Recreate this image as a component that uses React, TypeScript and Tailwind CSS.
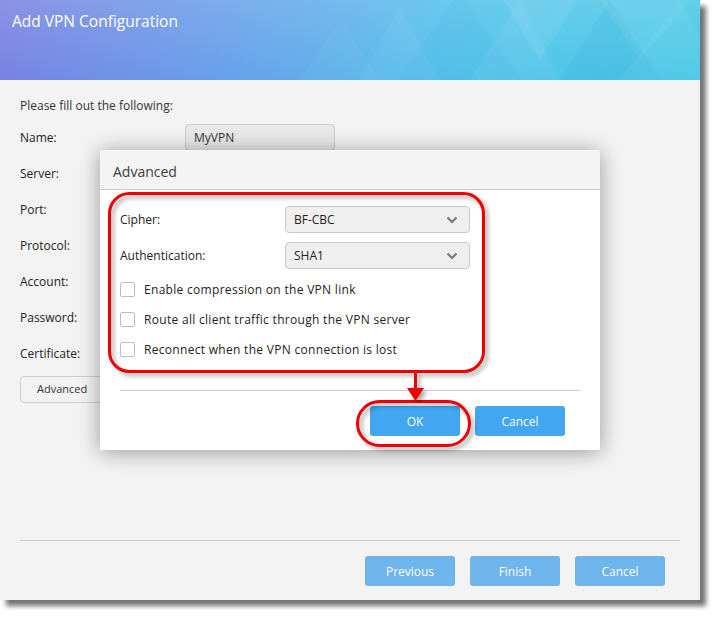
import React from 'react';

const fields = ['Name:', 'Server:', 'Port:', 'Protocol:', 'Account:', 'Password:', 'Certificate:'];

function Chevron() {
  return (
    <svg width="12" height="8" viewBox="0 0 12 8" className="shrink-0">
      <path d="M1.5 1.5 L6 6 L10.5 1.5" fill="none" stroke="#7a7a7a" strokeWidth="2.2" />
    </svg>
  );
}

function Select({ value }: { value: string }) {
  return (
    <div className="flex h-[27px] w-[185px] items-center justify-between rounded-[4px] border border-[#c9c9c9] bg-[#efefef] pl-[8px] pr-[11px] text-[12px] text-[#222]">
      <span>{value}</span>
      <Chevron />
    </div>
  );
}

function Check({ label }: { label: string }) {
  return (
    <div className="flex h-[15px] items-center gap-[9px]">
      <div className="h-[15px] w-[15px] rounded-[2px] border border-[#bdbdbd] bg-white" />
      <span className="text-[12px] tracking-[0.3px] text-[#222]">{label}</span>
    </div>
  );
}

// header decoration: faint triangles on the right half
function HeaderPattern() {
  return (
    <svg className="absolute inset-0" width="700" height="80" viewBox="0 0 700 80">
      <polygon points="360,80 400,5 440,80" fill="#ffffff" opacity="0.05" />
      <polygon points="400,80 460,-10 520,80" fill="#3aa7d8" opacity="0.1" />
      <polygon points="470,80 520,0 560,80" fill="#ffffff" opacity="0.06" />
      <polygon points="500,-5 540,60 580,-5" fill="#ffffff" opacity="0.08" />
      <polygon points="560,80 610,0 660,80" fill="#2f9fd0" opacity="0.12" />
      <polygon points="600,0 640,60 690,0" fill="#ffffff" opacity="0.06" />
      <polygon points="620,80 680,0 720,80" fill="#ffffff" opacity="0.05" />
      <polygon points="300,80 340,20 380,80" fill="#ffffff" opacity="0.03" />
    </svg>
  );
}

function Annotations() {
  return (
    <svg className="pointer-events-none absolute inset-0" width="720" height="620" viewBox="0 0 720 620">
      <defs>
        <filter id="ds" x="-10%" y="-10%" width="130%" height="130%">
          <feDropShadow dx="3" dy="3" stdDeviation="2" floodColor="#000" floodOpacity="0.35" />
        </filter>
      </defs>
      <g filter="url(#ds)" fill="none" stroke="#ee0000" strokeWidth="3">
        <rect x="109.5" y="193.5" width="374" height="178" rx="20" />
        <rect x="357.5" y="401.5" width="112" height="44" rx="22" />
        <line x1="415.5" y1="372" x2="415.5" y2="390" />
      </g>
      <polygon points="407,388 424,388 415.5,401" fill="#ee0000" filter="url(#ds)" />
    </svg>
  );
}

export default function App() {
  return (
    <div className="relative h-[620px] w-[720px] bg-white font-['Open_Sans','Noto_Sans',sans-serif]">
      {/* main wizard window */}
      <div className="flex h-[600px] w-[700px] flex-col bg-[#f3f3f3] shadow-[6px_6px_5px_rgba(0,0,0,0.55)]">
        <div className="relative h-[80px] overflow-hidden bg-[linear-gradient(100deg,#7880e2_0%,#65a2ea_35%,#52c2ea_65%,#47c8e6_100%)]">
          <div className="absolute inset-0 bg-[linear-gradient(to_bottom,rgba(255,255,255,0.14),rgba(255,255,255,0))]" />
          <HeaderPattern />
          <div className="relative px-[12px] pt-[10px] text-[15.5px] text-white">Add VPN Configuration</div>
        </div>

        <div className="flex-1 px-[20px] pt-[17px]">
          <div className="text-[12px] text-[#333]">Please fill out the following:</div>
          <div className="mt-[9px] flex flex-col gap-[9px]">
            {fields.map((f, i) => (
              <div key={f} className="flex h-[27px] items-center">
                <span className="w-[165px] text-[12px] text-[#222]">{f}</span>
                <div className="flex h-[27px] w-[150px] items-center rounded-[4px] border border-[#cccccc] bg-[#e9e9e9] px-[8px] text-[12px] text-[#333]">
                  {i === 0 ? 'MyVPN' : ''}
                </div>
              </div>
            ))}
            <div className="flex h-[27px] w-[130px] items-center rounded-[4px] border border-[#cfcfcf] bg-[#f3f3f3] pl-[16px] text-[11px] text-[#333]">
              Advanced
            </div>
          </div>
        </div>

        <div className="mx-[20px] flex justify-end gap-[15px] border-t border-[#c6c6d8] pb-[14px] pr-[15px] pt-[15px]">
          {['Previous', 'Finish', 'Cancel'].map((b) => (
            <div key={b} className="flex h-[30px] w-[90px] items-center justify-center rounded-[3px] bg-[#6db5ea] pt-[2px] text-[12px] text-white">
              {b}
            </div>
          ))}
        </div>
      </div>

      {/* Advanced dialog over the wizard */}
      <div className="absolute left-[100px] top-[150px] flex h-[300px] w-[500px] flex-col rounded-t-[3px] bg-white shadow-[0_2px_22px_rgba(0,0,0,0.38)]">
        <div className="flex h-[40px] shrink-0 items-center rounded-t-[3px] border-b border-[#c9c9c9] bg-[rgba(243,243,243,0.92)] px-[13px] pt-[3px] text-[14px] text-[#3c3c3c]">
          Advanced
        </div>
        <div className="flex flex-1 flex-col px-[20px] pt-[16px]">
          <div className="flex flex-col gap-[9px]">
            <div className="flex items-center">
              <span className="w-[165px] text-[12px] text-[#222]">Cipher:</span>
              <Select value="BF-CBC" />
            </div>
            <div className="flex items-center">
              <span className="w-[165px] text-[12px] text-[#222]">Authentication:</span>
              <Select value="SHA1" />
            </div>
          </div>
          <div className="mt-[13px] flex flex-col gap-[15px]">
            <Check label="Enable compression on the VPN link" />
            <Check label="Route all client traffic through the VPN server" />
            <Check label="Reconnect when the VPN connection is lost" />
          </div>
          <div className="mt-[33px] border-t border-[#cfcfcf]" />
          <div className="mt-[15px] flex justify-end gap-[15px] pr-[15px]">
            <div className="flex h-[30px] w-[90px] items-center justify-center rounded-[3px] bg-[#42a6f0] pt-[1px] text-[12px] text-white">OK</div>
            <div className="flex h-[30px] w-[90px] items-center justify-center rounded-[3px] bg-[#42a6f0] pt-[1px] text-[12px] text-white">Cancel</div>
          </div>
        </div>
      </div>

      <Annotations />
    </div>
  );
}
